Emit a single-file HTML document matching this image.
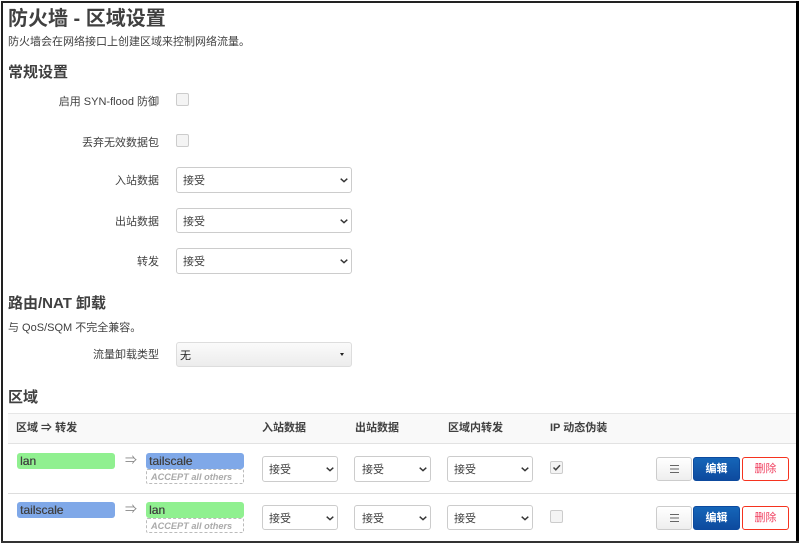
<!DOCTYPE html>
<html lang="zh-CN"><head><meta charset="utf-8"><title>防火墙 - 区域设置</title>
<style>
html,body{margin:0;padding:0;background:#fff}
body{width:800px;height:546px;position:relative;overflow:hidden;font-family:"Liberation Sans","Noto Sans CJK SC",sans-serif;color:#404040;font-size:11px}
#w{position:absolute;left:0;top:0;width:800px;height:546px;filter:blur(.3px)}
.a{position:absolute;white-space:nowrap}
.l{position:absolute;white-space:nowrap;right:641px;font-size:11px;color:#404040;line-height:14px}
h1,h2{margin:0;font-weight:700;color:#404040;position:absolute;white-space:nowrap}
h1{font-size:20px;line-height:24px;left:8px;top:7px}
h2{font-size:15px;line-height:18px;left:8px}
.cb{position:absolute;width:11px;height:11px;border:1px solid #ccc;border-radius:2px;background:#f4f4f4;box-sizing:content-box}
.s{position:absolute;box-sizing:border-box;background:#fff;border:1px solid #ccc;border-radius:3px;font-size:11px;color:#404040;line-height:14px}
.s span{position:absolute;left:6px;top:50%;margin-top:-6px}
.s svg{position:absolute;right:3px;top:50%;margin-top:-2px}
.th{position:absolute;top:421px;font-size:11px;font-weight:700;color:#404040;line-height:14px;white-space:nowrap}
.z{position:absolute;box-sizing:border-box;border-radius:3px;font-size:12px;line-height:17px;padding-left:3px;color:#404040;text-shadow:.3px 0 0 #404040}
.g{background:#90f090}.b{background:#7fa8e8}
.acc{position:absolute;box-sizing:border-box;width:98px;height:15px;left:146px;border:1px dashed #bbb;border-radius:2px;font-size:9.2px;font-style:italic;font-weight:700;color:#aaa;line-height:14px;padding-left:4px;white-space:nowrap}
.btn{position:absolute;box-sizing:border-box;border-radius:3px;font-size:11px;text-align:center;height:24px;line-height:23px}
.m{left:656px;width:36px;background:linear-gradient(#fff,#eee);border:1px solid #ccc;color:#555}
.m svg{position:absolute;left:13px;top:6px}
.e{left:693px;width:47px;background:linear-gradient(#1565b8,#0d4a9e);border:1px solid #0d4a9e;color:#fff;font-weight:700}
.d{left:742px;width:47px;background:#fff;border:1px solid #f5331f;color:#f04060}
</style></head><body>
<div id="w">
<div class="a" style="left:1px;top:1px;width:797px;height:2px;background:#222"></div>
<div class="a" style="left:1px;top:1px;width:2px;height:542px;background:#222"></div>
<div class="a" style="left:796px;top:1px;width:3px;height:542px;background:#000"></div>
<div class="a" style="left:1px;top:541px;width:798px;height:2px;background:#333"></div>

<h1>防火墙 - 区域设置</h1>
<div class="a" style="left:8px;top:35px;font-size:11px;line-height:14px">防火墙会在网络接口上创建区域来控制网络流量。</div>
<h2 style="top:64px">常规设置</h2>

<div class="l" style="top:95px">启用 SYN-flood 防御</div>
<div class="cb" style="left:176px;top:93px"></div>
<div class="l" style="top:136px">丢弃无效数据包</div>
<div class="cb" style="left:176px;top:134px"></div>

<div class="l" style="top:174px">入站数据</div>
<div class="s" style="left:176px;top:167px;width:176px;height:26px"><span>接受</span><svg width="8" height="5"><path d="M.7 .7l3.3 3 3.3-3" fill="none" stroke="#333" stroke-width="1.4"/></svg></div>
<div class="l" style="top:215px">出站数据</div>
<div class="s" style="left:176px;top:208px;width:176px;height:25px"><span>接受</span><svg width="8" height="5"><path d="M.7 .7l3.3 3 3.3-3" fill="none" stroke="#333" stroke-width="1.4"/></svg></div>
<div class="l" style="top:255px">转发</div>
<div class="s" style="left:176px;top:248px;width:176px;height:26px"><span>接受</span><svg width="8" height="5"><path d="M.7 .7l3.3 3 3.3-3" fill="none" stroke="#333" stroke-width="1.4"/></svg></div>

<h2 style="top:295px">路由/NAT 卸载</h2>
<div class="a" style="left:8px;top:321px;font-size:11px;line-height:14px">与 QoS/SQM 不完全兼容。</div>
<div class="l" style="top:348px">流量卸载类型</div>
<div class="s" style="left:176px;top:342px;width:176px;height:25px;background:linear-gradient(#fafafa,#ececec);border-color:#ddd"><span style="left:3px;color:#222">无</span><svg width="6" height="5" style="right:6px;margin-top:-3px"><path d="M1 1h4L3 4z" fill="#222"/></svg></div>

<h2 style="top:389px">区域</h2>

<div class="a" style="left:8px;top:413px;width:788px;height:31px;background:#f9f9f9;border-top:1px solid #e6e6e6;border-bottom:1px solid #e2e2e2;box-sizing:border-box"></div>
<div class="th" style="left:16px">区域 ⇒ 转发</div>
<div class="th" style="left:262px">入站数据</div>
<div class="th" style="left:355px">出站数据</div>
<div class="th" style="left:448px">区域内转发</div>
<div class="th" style="left:550px">IP 动态伪装</div>

<div class="a" style="left:8px;top:493px;width:788px;height:1px;background:#ddd"></div>

<!-- row 1 -->
<div class="z g" style="left:17px;top:453px;width:98px;height:16px">lan</div>
<div class="a" style="left:125px;top:453px;font-size:12px;color:#888;line-height:15px">⇒</div>
<div class="z b" style="left:146px;top:453px;width:98px;height:16px">tailscale</div>
<div class="acc" style="top:469px">ACCEPT all others</div>
<div class="s" style="left:262px;top:456px;width:76px;height:26px"><span>接受</span><svg width="8" height="5"><path d="M.7 .7l3.3 3 3.3-3" fill="none" stroke="#333" stroke-width="1.4"/></svg></div>
<div class="s" style="left:354px;top:456px;width:77px;height:26px"><span style="left:7px">接受</span><svg width="8" height="5"><path d="M.7 .7l3.3 3 3.3-3" fill="none" stroke="#333" stroke-width="1.4"/></svg></div>
<div class="s" style="left:447px;top:456px;width:86px;height:26px"><span>接受</span><svg width="8" height="5"><path d="M.7 .7l3.3 3 3.3-3" fill="none" stroke="#333" stroke-width="1.4"/></svg></div>
<div class="cb" style="left:550px;top:461px"><svg width="11" height="11" style="position:absolute;left:0;top:0"><path d="M2.5 5.5l2.3 2.3L9 3.2" fill="none" stroke="#444" stroke-width="1.5"/></svg></div>
<div class="btn m" style="top:457px"><svg width="9" height="10"><path d="M0 1.5h9M0 5h9M0 8.5h9" stroke="#666" stroke-width="1"/></svg></div>
<div class="btn e" style="top:457px">编辑</div>
<div class="btn d" style="top:457px">删除</div>

<!-- row 2 -->
<div class="z b" style="left:17px;top:502px;width:98px;height:16px">tailscale</div>
<div class="a" style="left:125px;top:502px;font-size:12px;color:#888;line-height:15px">⇒</div>
<div class="z g" style="left:146px;top:502px;width:98px;height:16px">lan</div>
<div class="acc" style="top:518px">ACCEPT all others</div>
<div class="s" style="left:262px;top:505px;width:76px;height:25px"><span>接受</span><svg width="8" height="5"><path d="M.7 .7l3.3 3 3.3-3" fill="none" stroke="#333" stroke-width="1.4"/></svg></div>
<div class="s" style="left:354px;top:505px;width:77px;height:25px"><span style="left:7px">接受</span><svg width="8" height="5"><path d="M.7 .7l3.3 3 3.3-3" fill="none" stroke="#333" stroke-width="1.4"/></svg></div>
<div class="s" style="left:447px;top:505px;width:86px;height:25px"><span>接受</span><svg width="8" height="5"><path d="M.7 .7l3.3 3 3.3-3" fill="none" stroke="#333" stroke-width="1.4"/></svg></div>
<div class="cb" style="left:550px;top:510px"></div>
<div class="btn m" style="top:506px"><svg width="9" height="10"><path d="M0 1.5h9M0 5h9M0 8.5h9" stroke="#666" stroke-width="1"/></svg></div>
<div class="btn e" style="top:506px">编辑</div>
<div class="btn d" style="top:506px">删除</div>
</div>
</body></html>
